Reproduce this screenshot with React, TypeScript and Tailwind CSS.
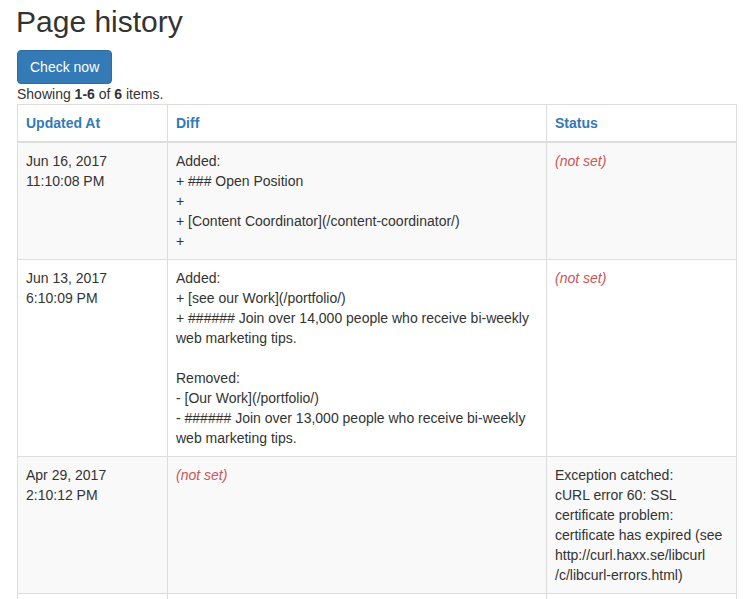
import React from 'react'

type Row = {
  date: string
  time: string
  diff: React.ReactNode
  status: React.ReactNode
}

const NotSet = () => <span className="italic text-[#c55]">(not set)</span>

const rows: Row[] = [
  {
    date: 'Jun 16, 2017',
    time: '11:10:08 PM',
    diff: (
      <>
        Added:
        <br />+ ### Open Position
        <br />+
        <br />+ [Content Coordinator](/content-coordinator/)
        <br />+
      </>
    ),
    status: <NotSet />,
  },
  {
    date: 'Jun 13, 2017',
    time: '6:10:09 PM',
    diff: (
      <>
        Added:
        <br />+ [see our Work](/portfolio/)
        <br />+ ###### Join over 14,000 people who receive bi-weekly web marketing tips.
        <br />
        <br />Removed:
        <br />- [Our Work](/portfolio/)
        <br />- ###### Join over 13,000 people who receive bi-weekly web marketing tips.
      </>
    ),
    status: <NotSet />,
  },
  {
    date: 'Apr 29, 2017',
    time: '2:10:12 PM',
    diff: <NotSet />,
    status: (
      <>
        Exception catched:
        <br />
        cURL error 60: SSL certificate problem: certificate has expired (see http://curl.haxx.se/libcurl
        <br />
        /c/libcurl-errors.html)
      </>
    ),
  },
  {
    date: 'Apr 21, 2017',
    time: '4:10:05 PM',
    diff: <NotSet />,
    status: <NotSet />,
  },
]

export default function App() {
  return (
    <div
      className="min-h-screen bg-white pl-[17px] text-[14px] leading-[20px] text-[#333]"
      style={{ fontFamily: '"Liberation Sans", Arial, Helvetica, sans-serif' }}
    >
      <h1 className="pt-[5px] text-[30px] leading-[33px] font-normal -ml-[1px]">Page history</h1>

      <button className="mt-[12px] h-[34px] rounded-[4px] border border-[#2e6da4] bg-[#337ab7] px-[12px] text-[14px] leading-[20px] text-white">
        Check now
      </button>

      <div>
        Showing <b>1-6</b> of <b>6</b> items.
      </div>

      <table className="w-[720px] table-fixed border-collapse border border-[#ddd]">
        <colgroup>
          <col className="w-[150px]" />
          <col className="w-[379px]" />
          <col />
        </colgroup>
        <thead>
          <tr>
            <th className="border border-b-2 border-[#ddd] p-[8px] text-left font-bold text-[#337ab7]">Updated At</th>
            <th className="border border-b-2 border-[#ddd] p-[8px] text-left font-bold text-[#337ab7]">Diff</th>
            <th className="border border-b-2 border-[#ddd] p-[8px] text-left font-bold text-[#337ab7]">Status</th>
          </tr>
        </thead>
        <tbody>
          {rows.map((r, i) => (
            <tr key={i} className={i % 2 === 0 ? 'bg-[#f9f9f9]' : 'bg-white'}>
              <td className="border border-[#ddd] p-[8px] align-top">
                {r.date}
                <br />
                {r.time}
              </td>
              <td className="border border-[#ddd] p-[8px] align-top">{r.diff}</td>
              <td className="border border-[#ddd] p-[8px] align-top">{r.status}</td>
            </tr>
          ))}
        </tbody>
      </table>
    </div>
  )
}
